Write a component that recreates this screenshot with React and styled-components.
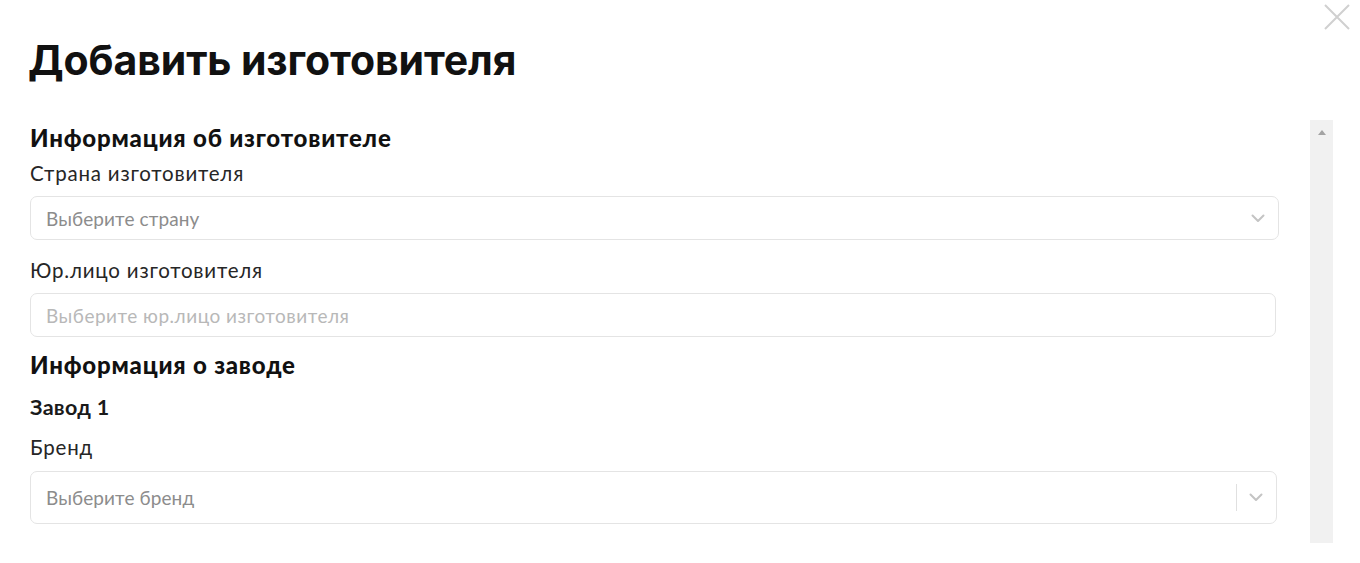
import styled, { createGlobalStyle } from 'styled-components';

const GlobalStyle = createGlobalStyle`
  html, body {
    margin: 0;
    padding: 0;
    background: #ffffff;
  }
  body {
    font-family: Lato, "Noto Sans", sans-serif;
    color: #1a1a1a;
  }
`;

const Modal = styled.div`
  position: relative;
  width: 1360px;
  height: 563px;
  padding: 36px 0 0 30px;
  box-sizing: border-box;
  overflow: hidden;
  background: #ffffff;
`;

const Title = styled.h1`
  margin: 0 0 0 -2px;
  font-family: Inter, "Noto Sans", sans-serif;
  font-size: 41px;
  line-height: 48px;
  font-weight: 700;
  color: #111111;
  letter-spacing: -0.1px;
`;

const CloseButton = styled.button`
  position: absolute;
  top: 3px;
  right: 9px;
  width: 28px;
  height: 28px;
  padding: 0;
  border: 0;
  background: none;
  cursor: pointer;
`;

const BodyRow = styled.div`
  display: flex;
  gap: 31px;
  margin-top: 36px;
  height: 423px;
`;

const ScrollContent = styled.div`
  width: 1249px;
  overflow: hidden;
  padding-top: 4px;
`;

const Scrollbar = styled.div`
  width: 23px;
  background: #f1f1f1;
  display: flex;
  justify-content: center;
  padding-top: 10px;
  box-sizing: border-box;
`;

const ScrollArrow = styled.div`
  width: 0;
  height: 0;
  border-left: 4px solid transparent;
  border-right: 4px solid transparent;
  border-bottom: 5px solid #a3a3a3;
`;

const SectionTitle = styled.h2`
  margin: ${p => p.$top || 0}px 0 0;
  font-size: 24px;
  line-height: 28px;
  font-weight: 900;
  color: #111111;
  letter-spacing: 0.8px;
`;

const SubTitle = styled.h3`
  margin: 16px 0 0;
  font-size: 21.5px;
  line-height: 24px;
  font-weight: 700;
  color: #1a1a1a;
  letter-spacing: 0.3px;
`;

const Label = styled.div`
  margin-top: ${p => p.$top}px;
  font-size: 20.5px;
  line-height: 24px;
  color: #262626;
  letter-spacing: 0.8px;
`;

const Field = styled.div`
  margin-top: ${p => p.$top || 11}px;
  width: ${p => p.$width}px;
  height: ${p => p.$height}px;
  box-sizing: border-box;
  border: 1px solid #e4e4e4;
  border-radius: 7px;
  display: flex;
  align-items: center;
  padding-left: 15px;
`;

const Placeholder = styled.span`
  flex: 1;
  font-size: 19px;
  letter-spacing: 0.1px;
  color: ${p => (p.$light ? '#b8b8b8' : '#8c8c8c')};
`;

const WidePlaceholder = styled(Placeholder)`
  letter-spacing: 0.5px;
`;

const Indicators = styled.div`
  display: flex;
  align-items: center;
  align-self: stretch;
  padding-right: 13px;
`;

const Separator = styled.span`
  width: 1px;
  height: 27px;
  background: #e0e0e0;
  margin-right: 12px;
`;

const Chevron = () => (
  <svg width="14" height="9" viewBox="0 0 14 9" fill="none">
    <path d="M1.5 1.5 7 7l5.5-5.5" stroke="#c4c4c4" strokeWidth="2" strokeLinecap="round" strokeLinejoin="round" />
  </svg>
);

export default function App() {
  return (
    <>
      <GlobalStyle />
      <Modal>
        <Title>Добавить изготовителя</Title>
        <CloseButton aria-label="Закрыть">
          <svg width="28" height="28" viewBox="0 0 28 28">
            <path d="M2 2l24 24M26 2 2 26" stroke="#d0d0d0" strokeWidth="2" />
          </svg>
        </CloseButton>
        <BodyRow>
          <ScrollContent>
            <SectionTitle>Информация об изготовителе</SectionTitle>
            <Label $top={9}>Страна изготовителя</Label>
            <Field $width={1249} $height={44}>
              <Placeholder>Выберите страну</Placeholder>
              <Indicators>
                <Chevron />
              </Indicators>
            </Field>
            <Label $top={18}>Юр.лицо изготовителя</Label>
            <Field $width={1246} $height={44}>
              <WidePlaceholder $light>Выберите юр.лицо изготовителя</WidePlaceholder>
            </Field>
            <SectionTitle $top={14}>Информация о заводе</SectionTitle>
            <SubTitle>Завод 1</SubTitle>
            <Label $top={16}>Бренд</Label>
            <Field $width={1247} $height={53} $top={12}>
              <Placeholder>Выберите бренд</Placeholder>
              <Indicators>
                <Separator />
                <Chevron />
              </Indicators>
            </Field>
          </ScrollContent>
          <Scrollbar>
            <ScrollArrow />
          </Scrollbar>
        </BodyRow>
      </Modal>
    </>
  );
}
